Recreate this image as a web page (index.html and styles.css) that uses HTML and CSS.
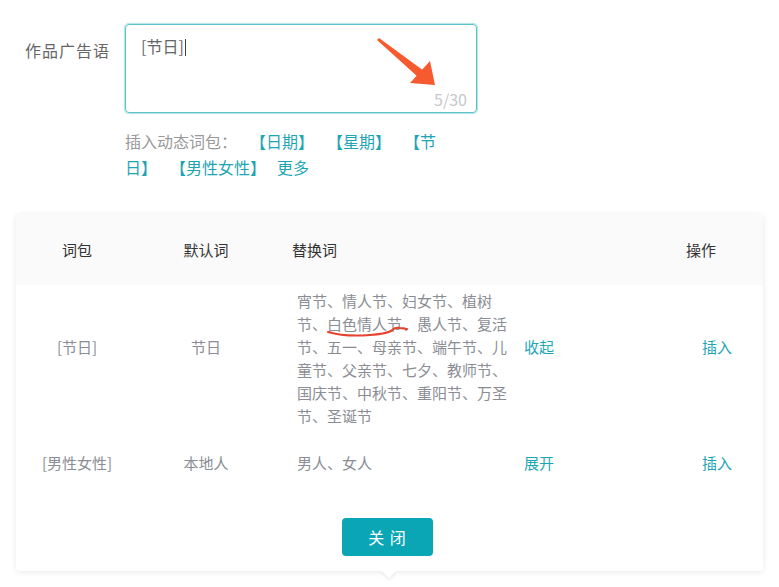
FILE: index.html
```html
<!DOCTYPE html>
<html lang="zh-CN">
<head>
<meta charset="utf-8">
<title>作品广告语</title>
<link rel="stylesheet" href="styles.css">
</head>
<body>
<div class="form-row">
  <div class="label">作品广告语</div>
  <div class="field">
    <div class="textarea">
      <span class="value">[节日]</span><span class="caret"></span>
      <svg class="arrow" width="80" height="70" viewBox="0 0 80 70">
        <polygon points="0,2 2,0 47,33 41,39" fill="#f65a2e"/>
        <polygon points="58,47 33,45 53,23" fill="#f65a2e"/>
      </svg>
      <span class="count">5/30</span>
    </div>
    <div class="insert"><span class="hint">插入动态词包：</span><a class="tag">【日期】</a><a class="tag">【星期】</a><a class="tag">【节</a><a class="tag cont">日】</a><a class="tag">【男性女性】</a><a class="tag more">更多</a></div>
  </div>
</div>

<div class="panel">
  <div class="row head">
    <div class="c1">词包</div>
    <div class="c2">默认词</div>
    <div class="c3">替换词</div>
    <div class="c4"></div>
    <div class="c5">操作</div>
  </div>
  <div class="row body r1">
    <div class="c1 cell">[节日]</div>
    <div class="c2 cell">节日</div>
    <div class="c3">
      <div class="words">宵节、情人节、妇女节、植树节、白色情人节、愚人节、复活节、五一、母亲节、端午节、儿童节、父亲节、七夕、教师节、国庆节、中秋节、重阳节、万圣节、圣诞节
        <svg class="scribble" width="120" height="60" viewBox="0 0 120 60">
          <path d="M31,43 Q48,48 73,46 Q88,45 94,42 Q98,38 103,39 L110,40" fill="none" stroke="#e8412c" stroke-width="2" stroke-linecap="round"/>
        </svg>
      </div>
    </div>
    <div class="c4 cell link">收起</div>
    <div class="c5 cell link">插入</div>
  </div>
  <div class="row body r2">
    <div class="c1 cell">[男性女性]</div>
    <div class="c2 cell">本地人</div>
    <div class="c3"><div class="words">男人、女人</div></div>
    <div class="c4 cell link">展开</div>
    <div class="c5 cell link">插入</div>
  </div>
  <div class="actions">
    <button class="btn">关 闭</button>
  </div>
</div>
</body>
</html>
```

FILE: styles.css
```css
* { box-sizing: border-box; }
html, body {
  margin: 0;
  padding: 0;
  background: #fff;
}
body {
  font-family: "Noto Sans CJK SC", "Noto Sans", sans-serif;
  color: #666;
  width: 779px;
  height: 587px;
  overflow: hidden;
  text-spacing-trim: space-all;
}
.form-row {
  display: flex;
  padding: 24px 0 0 25px;
}
.label {
  width: 100px;
  padding-top: 13px;
  font-size: 16px;
  letter-spacing: 1px;
  line-height: 26px;
  color: #666;
}
.field {
  display: flex;
  flex-direction: column;
}
.textarea {
  position: relative;
  width: 352px;
  height: 89px;
  border: 1px solid #5ec2ca;
  border-radius: 4px;
  box-shadow: 0 0 0 1px rgba(94, 194, 202, 0.35), 0 0 3px rgba(94, 194, 202, 0.4);
  padding: 10px 15px;
  font-size: 16px;
  line-height: 22px;
  color: #666;
}
.caret {
  display: inline-block;
  width: 1px;
  height: 17px;
  background: #444;
  vertical-align: -3px;
  margin-left: 1px;
}
.arrow {
  position: absolute;
  left: 251px;
  top: 13px;
}
.count {
  position: absolute;
  right: 9px;
  bottom: 4px;
  font-size: 16px;
  line-height: 18px;
  color: #c6c8cc;
}
.insert {
  width: 330px;
  margin-top: 15px;
  font-size: 16px;
  line-height: 26px;
  color: #999;
}
.tag {
  color: #1ea5b3;
  margin-left: 13px;
}
.tag.cont { margin-left: 0; }
.tag.more { margin-left: 11px; }
.panel {
  position: relative;
  margin: 34px 0 0 16px;
  width: 747px;
  background: #fff;
  box-shadow: 0 1px 6px rgba(0, 0, 0, 0.09);
  border-radius: 3px;
  padding-bottom: 15px;
}
.panel::after {
  content: "";
  position: absolute;
  left: 368px;
  bottom: -5px;
  width: 10px;
  height: 10px;
  background: #fff;
  transform: rotate(45deg);
  box-shadow: 2px 2px 3px rgba(0, 0, 0, 0.06);
}
.row {
  display: grid;
  grid-template-columns: 122px 136px 250px 120px 119px;
  font-size: 15px;
}
.head {
  height: 71px;
  align-items: center;
  background: #fafafa;
  color: #333;
  border-radius: 3px 3px 0 0;
}
.head .c1, .head .c2 { text-align: center; }
.head .c3 { padding-left: 18px; }
.head .c5 { padding-left: 42px; }
.body {
  align-items: start;
  line-height: 23px;
  color: #8a8d94;
}
.body .c1, .body .c2 { text-align: center; }
.body .c3 { padding-left: 23px; }
.body .c5 { padding-left: 58px; }
.r1 { padding: 4px 0 12px; }
.r1 .cell { padding-top: 46px; }
.r2 { padding-top: 12px; }
.words {
  position: relative;
  width: 212px;
}
.scribble {
  position: absolute;
  left: 0;
  top: 0;
}
.link { color: #1ea5b3; }
.actions {
  display: flex;
  justify-content: center;
  padding-top: 44px;
  padding-right: 4px;
}
.btn {
  width: 91px;
  height: 38px;
  border: none;
  border-radius: 4px;
  background: #0aa6b5;
  color: #fff;
  font-family: "Noto Sans CJK SC", sans-serif;
  font-size: 16px;
  letter-spacing: 1px;
  padding: 0;
}
```
